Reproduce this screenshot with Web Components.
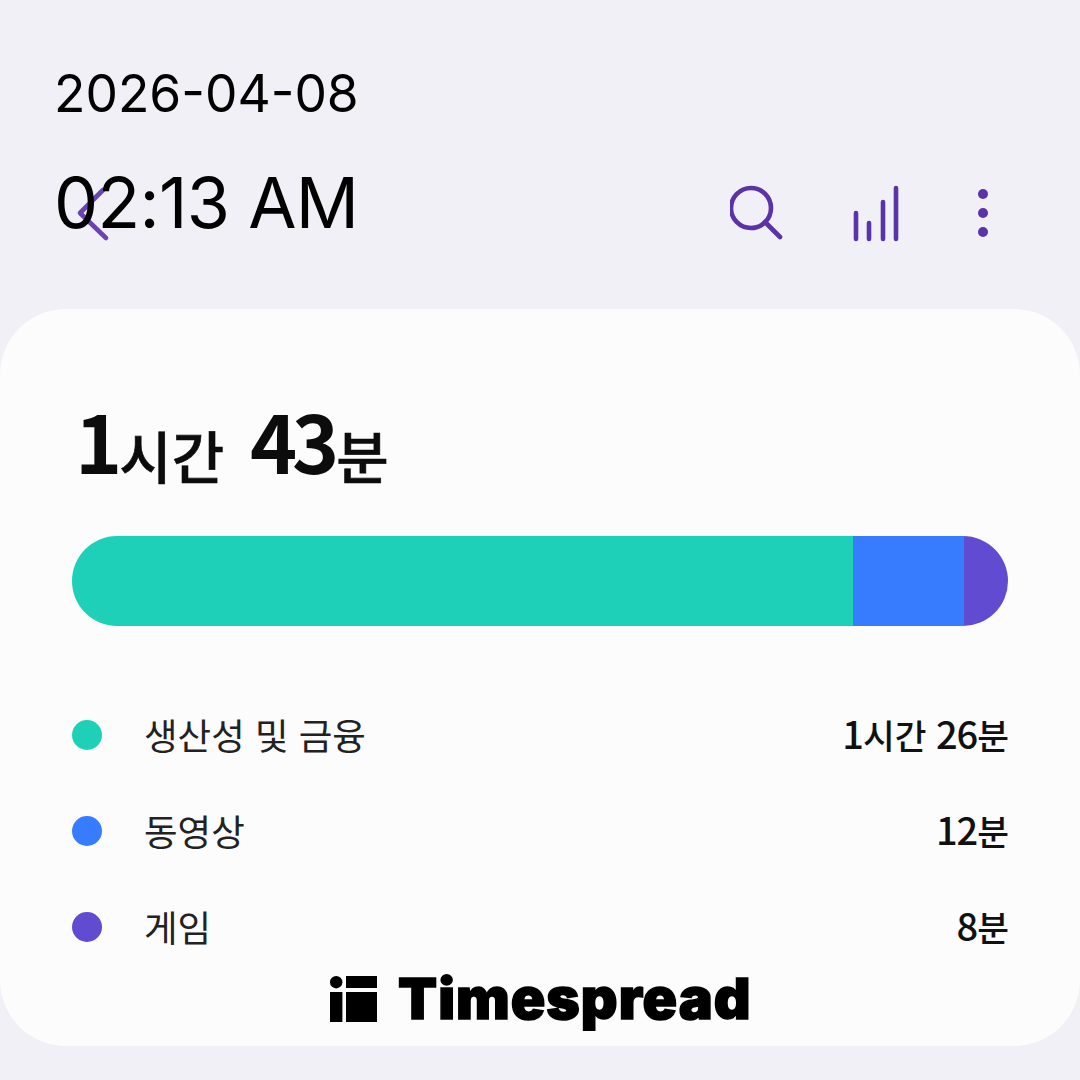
<!DOCTYPE html>
<html lang="ko">
<head>
<meta charset="utf-8">
<title>Timespread</title>
<style>
  html, body { margin: 0; height: 100%; }
  body { background: #f0f0f6; font-family: "Noto Sans CJK KR", "Noto Sans", sans-serif; }
</style>
</head>
<body>
<usage-screen>
  <date-stamp slot="stamp" date="2026-04-08" time="02:13 AM"></date-stamp>
  <app-bar slot="bar"></app-bar>
  <usage-card total="1시간 43분">
    <usage-row color="#1fd0b8" label="생산성 및 금융" value="1시간 26분" share="781"></usage-row>
    <usage-row color="#377cff" label="동영상" value="12분" share="111"></usage-row>
    <usage-row color="#614bd0" label="게임" value="8분" share="44"></usage-row>
  </usage-card>
  <brand-mark slot="brand"></brand-mark>
</usage-screen>

<script>
// digits are set larger than hangul, the way the phone font draws them
function durationHtml(text) {
  return text.replace(/\d+|[^\d\s]+/g, (m) =>
    /\d/.test(m) ? `<span class="num">${m}</span>` : `<span class="han">${m}</span>`)
}

class UsageScreen extends HTMLElement {
  constructor() {
    super()
    this.attachShadow({ mode: 'open' }).innerHTML = `
      <style>
        :host { display: flex; flex-direction: column; position: relative; height: 1080px; overflow: hidden; }
      </style>
      <slot name="bar"></slot>
      <slot></slot>
      <slot name="stamp"></slot>
      <slot name="brand"></slot>`
  }
}

class DateStamp extends HTMLElement {
  constructor() {
    super()
    this.attachShadow({ mode: 'open' }).innerHTML = `
      <style>
        :host { position: absolute; left: 54px; top: 60px; display: block; color: #000; font-family: Inter, sans-serif; }
        div { white-space: nowrap; }
        .date { font-size: 51.5px; line-height: 66px; }
        .time { font-size: 70px; line-height: 84px; margin-top: 35px; letter-spacing: -.7px; }
      </style>
      <div class="date"></div>
      <div class="time"></div>`
    this.shadowRoot.querySelector('.date').textContent = this.getAttribute('date')
    this.shadowRoot.querySelector('.time').textContent = this.getAttribute('time')
  }
}

class AppBar extends HTMLElement {
  constructor() {
    super()
    this.attachShadow({ mode: 'open' }).innerHTML = `
      <style>
        :host { display: flex; align-items: flex-start; height: 309px; box-sizing: border-box; padding: 176px 60px 0 62px; }
        svg { width: 74px; height: 74px; display: block; fill: none; stroke: #5b33a9; stroke-width: 4.6; stroke-linecap: round; stroke-linejoin: round; }
        .back { stroke: #6a44b4; margin-right: auto; }
        .actions { display: flex; gap: 34px; margin-left: auto; }
      </style>
      <svg class="back" viewBox="0 0 74 74"><path d="M41 14 18 37l26 25"/></svg>
      <div class="actions">
        <svg viewBox="0 0 74 74"><circle cx="21" cy="32" r="20"/><path d="M35 46 50 61"/></svg>
        <svg viewBox="0 0 74 74"><path d="M18 37v26M31 47v16M45 26v37M58 12v51"/></svg>
        <svg viewBox="0 0 74 74"><g fill="#5b33a9" stroke="none"><circle cx="37" cy="18" r="5"/><circle cx="37" cy="37" r="5"/><circle cx="37" cy="56" r="5"/></g></svg>
      </div>`
  }
}

class UsageCard extends HTMLElement {
  constructor() {
    super()
    this.attachShadow({ mode: 'open' }).innerHTML = `
      <style>
        :host { display: block; background: #fcfcfc; border-radius: 66px; height: 737px; box-sizing: border-box; padding: 70px 72px 0; }
        .total { height: 122px; padding-left: 3px; color: #0c0c0c; font-weight: 500; line-height: 120px; white-space: pre; font-size: 60px; word-spacing: 7px; }
        .num { font-size: 80px; font-weight: 700; letter-spacing: -5px; margin-right: 3px; }
        .han { font-size: 57px; vertical-align: -5px; margin: 0 2px 0 -1px; -webkit-text-stroke: .6px #0c0c0c; }
        .bar { display: flex; height: 90px; margin: 35px 0 60px; border-radius: 45px; overflow: hidden; }
        .rows { display: flex; flex-direction: column; }
      </style>
      <div class="total"></div>
      <div class="bar"></div>
      <div class="rows"><slot></slot></div>`
    this.shadowRoot.querySelector('.total').innerHTML = durationHtml(this.getAttribute('total'))
    const bar = this.shadowRoot.querySelector('.bar')
    for (const row of this.querySelectorAll('usage-row')) {
      const seg = document.createElement('div')
      seg.style.background = row.getAttribute('color')
      seg.style.width = row.getAttribute('share') + 'px'
      bar.append(seg)
    }
  }
}

class UsageRow extends HTMLElement {
  constructor() {
    super()
    this.attachShadow({ mode: 'open' }).innerHTML = `
      <style>
        :host { display: flex; align-items: center; height: 96px; color: #222; }
        .dot { width: 30px; height: 30px; border-radius: 50%; margin-right: 42px; flex: none; position: relative; top: 1px; }
        .label { flex: 1; font-size: 36.5px; }
        .value { font-weight: 500; color: #111; white-space: pre; font-size: 34px; margin-right: -1px; position: relative; top: -2px; }
        .num { font-size: 38px; letter-spacing: -1px; }
        .han { font-size: 34.5px; }
      </style>
      <span class="dot"></span>
      <span class="label"></span>
      <span class="value"></span>`
    this.shadowRoot.querySelector('.dot').style.background = this.getAttribute('color')
    this.shadowRoot.querySelector('.label').textContent = this.getAttribute('label')
    this.shadowRoot.querySelector('.value').innerHTML = durationHtml(this.getAttribute('value'))
  }
}

class BrandMark extends HTMLElement {
  constructor() {
    super()
    this.attachShadow({ mode: 'open' }).innerHTML = `
      <style>
        :host { position: absolute; left: 330px; top: 976px; display: flex; align-items: center; gap: 21px; color: #000; }
        svg { width: 47px; height: 46px; display: block; }
        span { font-family: Inter, sans-serif; font-weight: 900; font-size: 57px; line-height: 46px; letter-spacing: 1px; -webkit-text-stroke: 1.5px #000; }
      </style>
      <svg viewBox="0 0 47 46"><circle cx="6.2" cy="6.2" r="6.2"/><rect x="16" width="31" height="12"/><rect y="16" width="12.4" height="30"/><rect x="16" y="16" width="31" height="30"/></svg>
      <span>Timespread</span>`
  }
}

customElements.define('usage-screen', UsageScreen)
customElements.define('date-stamp', DateStamp)
customElements.define('app-bar', AppBar)
customElements.define('usage-card', UsageCard)
customElements.define('usage-row', UsageRow)
customElements.define('brand-mark', BrandMark)
</script>
</body>
</html>
